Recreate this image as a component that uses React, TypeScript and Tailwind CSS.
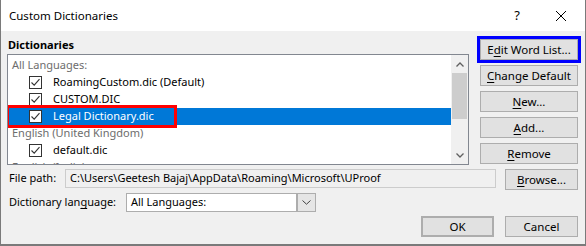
import React from "react";

type Row = { kind: "header" | "item"; label: string; selected?: boolean; marked?: boolean };

const rows: Row[] = [
  { kind: "header", label: "All Languages:" },
  { kind: "item", label: "RoamingCustom.dic (Default)" },
  { kind: "item", label: "CUSTOM.DIC" },
  { kind: "item", label: "Legal Dictionary.dic", selected: true, marked: true },
  { kind: "header", label: "English (United Kingdom)" },
  { kind: "item", label: "default.dic" },
  { kind: "header", label: "English (India)" },
];

const Check = () => (
  <span className="w-[13px] h-[13px] border border-[#333333] bg-white flex items-center justify-center shrink-0">
    <svg width="11" height="11" viewBox="0 0 11 11">
      <path d="M1.5 5.5 L4.2 8.2 L9.5 2.2" fill="none" stroke="#333333" strokeWidth="1.1" />
    </svg>
  </span>
);

// push button with one underlined access key
const Btn = ({
  pre,
  key1,
  post,
  w = "w-[98px]",
  extra = "",
}: {
  pre?: string;
  key1?: string;
  post?: string;
  w?: string;
  extra?: string;
}) => (
  <button
    className={`${w} h-[21px] bg-[#e1e1e1] border border-[#adadad] flex items-center justify-center text-[11.5px] text-black leading-none ${extra}`}
  >
    <span>
      {pre}
      {key1 && <span className="underline underline-offset-[2px]">{key1}</span>}
      {post}
    </span>
  </button>
);

export default function App() {
  return (
    <div className="w-[586px] h-[246px] flex flex-col border-x border-b-2 border-[#7a7a7a] font-['Noto_Sans',sans-serif] text-[11px] text-black overflow-hidden">
      {/* title bar */}
      <div className="h-[31px] bg-white flex items-center pl-[8px] pr-[19px] shrink-0 text-[11.5px]">
        <span>Custom Dictionaries</span>
        <div className="ml-auto flex items-center gap-[36px]">
          <span className="text-[13px]">?</span>
          <svg width="10" height="10" viewBox="0 0 10 10">
            <path d="M0 0 L10 10 M10 0 L0 10" stroke="#000" strokeWidth="1" />
          </svg>
        </div>
      </div>

      {/* body */}
      <div className="flex-1 bg-[#f0f0f0] pl-[6px] pr-[7px] pt-[7px] flex flex-col">
        <div className="flex justify-between">
          <div className="w-[462px] flex flex-col">
            <div className="h-[16px] pl-[1px] font-bold leading-[14px]">Dictionaries</div>
            <div className="h-[111px] border border-[#828790] bg-white flex overflow-hidden">
              <div className="flex-1 pt-[2px] flex flex-col">
                {rows.map((r) =>
                  r.kind === "header" ? (
                    <div key={r.label} className="h-[17px] shrink-0 flex items-center pl-[4px] text-[#6d6d6d]">
                      {r.label}
                    </div>
                  ) : (
                    <div
                      key={r.label}
                      className={`relative h-[17px] shrink-0 flex items-center pl-[21px] gap-[11px] ${
                        r.selected ? "bg-[#0078d7] text-white" : ""
                      }`}
                    >
                      <Check />
                      <span>{r.label}</span>
                      {r.marked && (
                        <div className="absolute left-[-2px] top-[-3px] w-[171px] h-[23px] border-[3px] border-[#ff0000]" />
                      )}
                    </div>
                  )
                )}
              </div>
              {/* scrollbar */}
              <div className="w-[17px] bg-[#f0f0f0] flex flex-col items-center">
                <div className="h-[18px] flex items-center justify-center">
                  <svg width="8" height="5" viewBox="0 0 8 5">
                    <path d="M0.5 4.5 L4 1 L7.5 4.5" fill="none" stroke="#606060" strokeWidth="1.3" />
                  </svg>
                </div>
                <div className="w-[15px] h-[46px] bg-[#cdcdcd]" />
                <div className="flex-1" />
                <div className="h-[18px] flex items-center justify-center">
                  <svg width="8" height="5" viewBox="0 0 8 5">
                    <path d="M0.5 0.5 L4 4 L7.5 0.5" fill="none" stroke="#606060" strokeWidth="1.3" />
                  </svg>
                </div>
              </div>
            </div>
          </div>

          <div className="w-[98px] pt-[1px] flex flex-col gap-[5px]">
            <Btn pre="E" key1="d" post="it Word List..." extra="outline-[3px] outline-solid outline-[#0000ff]" />
            <Btn key1="C" post="hange Default" />
            <Btn key1="N" post="ew..." />
            <Btn key1="A" post="dd..." />
            <Btn key1="R" post="emove" />
          </div>
        </div>

        {/* file path */}
        <div className="mt-[4px] flex items-start">
          <span className="w-[58px] pl-[2px] h-[19px] flex items-center">File path:</span>
          <div className="w-[431px] h-[19px] border border-[#cccccc] bg-[#f0f0f0] flex items-center pl-[4px] whitespace-nowrap overflow-hidden">
            C:\Users\Geetesh Bajaj\AppData\Roaming\Microsoft\UProof
          </div>
          <div className="ml-auto">
            <Btn key1="B" post="rowse..." w="w-[73px]" />
          </div>
        </div>

        {/* dictionary language */}
        <div className="mt-[3px] flex items-center">
          <span className="w-[119px] pl-[2px]">
            Dictionary lan<span className="underline underline-offset-[2px]">g</span>uage:
          </span>
          <div className="w-[190px] h-[19px] flex border border-[#adadad] bg-white">
            <div className="flex-1 flex items-center pl-[4px]">All Languages:</div>
            <div className="w-[19px] bg-[#e5e5e5] border-l-2 border-[#adadad] flex items-center justify-center">
              <svg width="9" height="5" viewBox="0 0 9 5">
                <path d="M0.5 0.5 L4.5 4.2 L8.5 0.5" fill="none" stroke="#404040" strokeWidth="1" />
              </svg>
            </div>
          </div>
        </div>

        {/* ok / cancel */}
        <div className="mt-[4px] flex justify-end gap-[11px]">
          <Btn post="OK" w="w-[73px]" extra="border-2 border-[#0078d7]" />
          <Btn post="Cancel" w="w-[73px]" />
        </div>
      </div>
    </div>
  );
}
